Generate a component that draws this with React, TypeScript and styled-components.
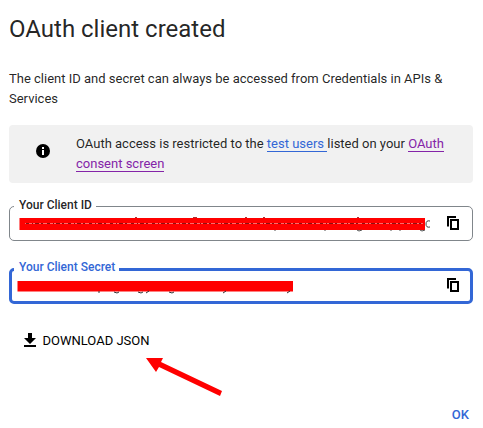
import React from "react";
import styled, { createGlobalStyle, css } from "styled-components";

const GlobalStyle = createGlobalStyle`
  *, *::before, *::after { box-sizing: border-box; }
  body { margin: 0; background: #fff; font-family: Roboto, sans-serif; }
`;

const Dialog = styled.main`
  position: relative;
  display: flex;
  flex-direction: column;
  width: 483px;
  height: 428px;
  padding: 13px 10px 0 9px;
  overflow: hidden;
  background: #fff;
  color: rgba(0, 0, 0, 0.87);
`;

const Title = styled.h1`
  margin: 0;
  font-size: 24px;
  font-weight: 400;
  line-height: 32px;
  white-space: nowrap;
`;

const Description = styled.p`
  margin: 24px 0 0;
  font-size: 13px;
  line-height: 20px;
`;

const Notice = styled.section`
  display: flex;
  align-items: center;
  height: 58px;
  margin-top: 16px;
  padding-left: 27px;
  border-radius: 4px;
  background: #f1f1f1;
`;

const NoticeIcon = styled.svg`
  flex: none;
  width: 14px;
  height: 14px;
  margin-top: -6px;
`;

const NoticeText = styled.p`
  margin: 0 0 0 26px;
  font-size: 13px;
  line-height: 20px;
  white-space: nowrap;
`;

const Link = styled.a<{ $visited?: boolean }>`
  color: ${(p) => (p.$visited ? "#8424a8" : "#3367d6")};
  border-bottom: 1px solid currentColor;
  text-decoration: none;
`;

const Field = styled.fieldset<{ $focused?: boolean }>`
  min-width: 0;
  margin: 15px 0 0;
  padding: 0 13px 0 10px;
  border: 1px solid #80868b;
  border-radius: 5px;
  ${(p) =>
    p.$focused &&
    css`
      margin-top: 19px;
      padding: 0 11px 0 8px;
      border: 3px solid #3367d6;
    `}
`;

const Legend = styled.legend<{ $focused?: boolean }>`
  margin-left: -6px;
  padding: 0 4px ${(p) => (p.$focused ? "5px" : "2px")} 5px;
  font-size: 12px;
  font-weight: 500;
  line-height: 14px;
  color: ${(p) => (p.$focused ? "#3367d6" : "rgba(0, 0, 0, 0.87)")};
`;

const FieldRow = styled.div<{ $focused?: boolean }>`
  display: flex;
  align-items: flex-start;
  justify-content: space-between;
  height: ${(p) => (p.$focused ? "23px" : "28px")};
  margin-top: ${(p) => (p.$focused ? "-1px" : "-2px")};
  padding-top: ${(p) => (p.$focused ? "0" : "4px")};
`;

const Value = styled.div`
  position: relative;
  width: 411px;
  height: 20px;
  margin-top: -2px;
`;

const Redaction = styled.svg`
  position: absolute;
  top: 0;
  left: -3px;
  width: 415px;
  height: 20px;
`;

const IconButton = styled.button`
  display: flex;
  flex: none;
  padding: 0;
  border: 0;
  background: none;
`;

const DownloadButton = styled.button`
  display: flex;
  align-items: center;
  align-self: flex-start;
  gap: 6.5px;
  height: 20px;
  margin: 27px 0 0 15px;
  padding: 0;
  border: 0;
  background: none;
  color: #000;
  font: 400 13px/20px Roboto, sans-serif;
`;

const DownloadIcon = styled.svg`
  width: 12px;
  height: 14px;
  margin-top: -2px;
`;

const Actions = styled.footer`
  display: flex;
  justify-content: flex-end;
  margin-top: 54px;
  padding-right: 4px;
`;

const OkButton = styled.button`
  padding: 0;
  border: 0;
  background: none;
  color: #3367d6;
  font: 500 13px/20px Roboto, sans-serif;
`;

const Arrow = styled.svg`
  position: absolute;
  left: 144px;
  top: 355px;
  width: 80px;
  height: 44px;
`;

const CopyIcon = () => (
  <svg width="12" height="15" viewBox="0 0 12 15" fill="none" stroke="#000" strokeWidth="2">
    <path d="M9 1H1v9.5" />
    <path d="M4 4h7v9H4z" />
  </svg>
);

export default function App() {
  return (
    <>
      <GlobalStyle />
      <Dialog>
        <Title>OAuth client created</Title>
        <Description>
          The client ID and secret can always be accessed from Credentials in APIs &amp;
          <br />
          Services
        </Description>
        <Notice>
          <NoticeIcon viewBox="0 0 14 14">
            <circle cx="7" cy="7" r="7" fill="#000" />
            <path d="M6 3h2v2H6zM6 6h2v5H6z" fill="#fff" />
          </NoticeIcon>
          <NoticeText>
            OAuth access is restricted to the <Link>test users </Link>listed on your{" "}
            <Link $visited>OAuth</Link>
            <br />
            <Link $visited>consent screen</Link>
          </NoticeText>
        </Notice>
        <Field>
          <Legend>Your Client ID</Legend>
          <FieldRow>
            <Value>
              <Redaction viewBox="0 0 415 20">
                <path d="M2.5 4h405.5v12H2.5z" fill="#f00" />
                <path d="M8 9.5h398" stroke="#ff6b6b" />
                <path d="M9 9.5h396" stroke="#8c1010" strokeDasharray="3 3 1 2 4 2 2 4" />
                <path d="M118 3.5h2M176 3.5h4M228 3.5h2M246 3.5h2M340 3.5h2" stroke="#a33" />
                <path d="M258 16v1M308 16v1M340 16l2 1 3-1M374 16v1M383 16v1M403 16l2 1 3-1" stroke="#555" fill="none" />
                <path d="M413 7q-4-1-4 3t4 3" stroke="#444" fill="none" />
              </Redaction>
            </Value>
            <IconButton aria-label="Copy client ID"><CopyIcon /></IconButton>
          </FieldRow>
        </Field>
        <Field $focused>
          <Legend $focused>Your Client Secret</Legend>
          <FieldRow $focused>
            <Value>
              <Redaction viewBox="0 0 415 20">
                <path d="M0.5 5h275.5v10.5H0.5z" fill="#f00" />
                <path d="M82 15v2M97 16l3 1 2-1M121 16l3 1 2-1M129 17l3-2M152 16l3 1 2-1M206 17l3-2M270 17l3-2" stroke="#333" fill="none" />
              </Redaction>
            </Value>
            <IconButton aria-label="Copy client secret"><CopyIcon /></IconButton>
          </FieldRow>
        </Field>
        <DownloadButton>
          <DownloadIcon viewBox="0 0 12 14">
            <path d="M4 0h4v5h4l-6 6-6-6h4zM0 12h12v2H0z" fill="#000" />
          </DownloadIcon>
          DOWNLOAD JSON
        </DownloadButton>
        <Actions>
          <OkButton>OK</OkButton>
        </Actions>
        <Arrow viewBox="0 0 80 44">
          <path d="M2 3h17l-2 4 61 29-2 5-61-29-3 5z" fill="#f00" />
        </Arrow>
      </Dialog>
    </>
  );
}
